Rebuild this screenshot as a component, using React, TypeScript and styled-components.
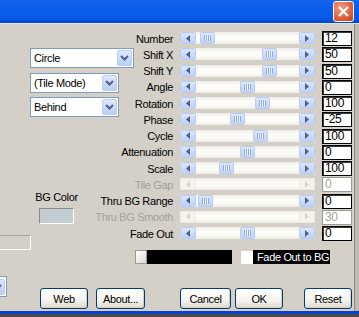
import styled, { createGlobalStyle } from 'styled-components';

type SliderRow = {
  label: string;
  value: string;
  pos?: number;
  disabled?: boolean;
};

const rows: SliderRow[] = [
  { label: 'Number', value: '12', pos: 4 },
  { label: 'Shift X', value: '50', pos: 66 },
  { label: 'Shift Y', value: '50', pos: 66 },
  { label: 'Angle', value: '0', pos: 44 },
  { label: 'Rotation', value: '100', pos: 59 },
  { label: 'Phase', value: '-25', pos: 34 },
  { label: 'Cycle', value: '100', pos: 57 },
  { label: 'Attenuation', value: '0', pos: 44 },
  { label: 'Scale', value: '100', pos: 23 },
  { label: 'Tile Gap', value: '0', disabled: true },
  { label: 'Thru BG Range', value: '0', pos: 2 },
  { label: 'Thru BG Smooth', value: '30', disabled: true },
  { label: 'Fade Out', value: '0', pos: 44 },
];

const GlobalStyle = createGlobalStyle`
  html, body {
    margin: 0;
    padding: 0;
    background: #d4d0c8;
  }
`;

const ArrowIcon = ({ dir, disabled }: { dir: 'left' | 'right'; disabled?: boolean }) => (
  <svg width="4" height="7" viewBox="0 0 4 7">
    <polygon
      points={dir === 'left' ? '4,0 0,3.5 4,7' : '0,0 4,3.5 0,7'}
      fill={disabled ? '#d6d4cc' : '#4d6185'}
    />
  </svg>
);

const Chevron = () => (
  <svg width="9" height="6" viewBox="0 0 9 6">
    <polyline points="1,1 4.5,4.5 8,1" fill="none" stroke="#4d6185" strokeWidth="2" />
  </svg>
);

const Combo = ({ text, width }: { text?: string; width: number }) => (
  <ComboBox style={{ width }}>
    <ComboText>{text}</ComboText>
    <ComboButton>
      <Chevron />
    </ComboButton>
  </ComboBox>
);

const App = () => {
  return (
    <>
      <GlobalStyle />
      <Window>
        <TitleBar>
          <CloseButton>
            <svg width="11" height="11" viewBox="0 0 11 11">
              <path d="M1 1 L10 10 M10 1 L1 10" stroke="#fff" strokeWidth="2.2" />
            </svg>
          </CloseButton>
        </TitleBar>
        <Frame>
          <Content>
            <Top>
              <LeftPanel>
                <Combo text="Circle" width={104} />
                <Combo text="(Tile Mode)" width={89} />
                <Combo text="Behind" width={89} />
                <ColorGroup>
                  <ColorLabel>BG Color</ColorLabel>
                  <Swatch />
                </ColorGroup>
                <EmptyField />
              </LeftPanel>
              <ControlGrid>
                {rows.map(row => (
                  <Row key={row.label}>
                    <Label $disabled={row.disabled}>{row.label}</Label>
                    <ScrollBar>
                      <ArrowButton $disabled={row.disabled}>
                        <ArrowIcon dir="left" disabled={row.disabled} />
                      </ArrowButton>
                      <Track>
                        {row.pos !== undefined && (
                          <Thumb style={{ marginLeft: row.pos }}>
                            <Grip />
                          </Thumb>
                        )}
                      </Track>
                      <ArrowButton $disabled={row.disabled}>
                        <ArrowIcon dir="right" disabled={row.disabled} />
                      </ArrowButton>
                    </ScrollBar>
                    <ValueBox $disabled={row.disabled}>{row.value}</ValueBox>
                  </Row>
                ))}
              </ControlGrid>
            </Top>
            <FadeRow>
              <PreviewBar>
                <PreviewChip />
              </PreviewBar>
              <CheckBox />
              <FadeLabel>Fade Out to BG</FadeLabel>
            </FadeRow>
            <ButtonRow>
              <PartialCombo>
                <ComboButton>
                  <Chevron />
                </ComboButton>
              </PartialCombo>
              <ButtonGroup $offset={33} $gap={8}>
                <Button $w={48}>Web</Button>
                <Button $w={49}>About...</Button>
              </ButtonGroup>
              <ButtonGroup $offset={35} $gap={4}>
                <Button $w={51}>Cancel</Button>
                <Button $w={48}>OK</Button>
              </ButtonGroup>
              <ButtonGroup $offset={21} $gap={0}>
                <Button $w={48}>Reset</Button>
              </ButtonGroup>
            </ButtonRow>
          </Content>
          <RightEdge />
        </Frame>
        <BottomEdge />
      </Window>
    </>
  );
};

const Window = styled.div`
  width: 359px;
  height: 317px;
  overflow: hidden;
  display: flex;
  flex-direction: column;
  background: #d4d0c8;
  font-family: 'Liberation Sans', Arial, sans-serif;
  font-size: 11px;
  letter-spacing: -0.35px;
  color: #000;
`;

const TitleBar = styled.div`
  flex: none;
  height: 23px;
  display: flex;
  justify-content: flex-end;
  align-items: center;
  padding-right: 5px;
  background: linear-gradient(#1466ee, #0a5de8 40%, #0559e6 80%, #0446cc);
  border-bottom: 1px solid #e4e1d8;
`;

const CloseButton = styled.div`
  width: 21px;
  height: 21px;
  box-sizing: border-box;
  display: flex;
  align-items: center;
  justify-content: center;
  border: 1px solid #fff;
  border-radius: 3px;
  background: radial-gradient(circle at 35% 30%, #f2a088, #e2643f 55%, #c4401f);
`;

const Frame = styled.div`
  flex: 1;
  display: flex;
  min-height: 0;
`;

const Content = styled.div`
  width: 354px;
  display: flex;
  flex-direction: column;
`;

const RightEdge = styled.div`
  flex: 1;
  background: #c0bcb3;
  border-left: 1px solid #8c8a84;
`;

const BottomEdge = styled.div`
  flex: none;
  height: 6px;
  background: linear-gradient(#0b3fd0 0 3px, #4a4a4a 3px);
`;

const Top = styled.div`
  display: flex;
  align-items: flex-start;
`;

const LeftPanel = styled.div`
  width: 135px;
  flex: none;
  display: flex;
  flex-direction: column;
  align-items: flex-start;
  padding: 24px 0 0 30px;
  box-sizing: border-box;
  & > div:nth-child(2) {
    margin-top: 5px;
  }
  & > div:nth-child(3) {
    margin-top: 4px;
  }
`;

const ComboBox = styled.div`
  height: 20px;
  box-sizing: border-box;
  display: flex;
  align-items: center;
  background: #fff;
  border: 1px solid #7f9db9;
`;

const ComboText = styled.span`
  flex: 1;
  padding-left: 3px;
  white-space: nowrap;
`;

const ComboButton = styled.div`
  width: 15px;
  height: 16px;
  margin-right: 1px;
  box-sizing: border-box;
  display: flex;
  align-items: center;
  justify-content: center;
  border: 1px solid #bccdf5;
  border-radius: 2px;
  background: linear-gradient(#dfe8fd, #b9cdf8);
`;

const ColorGroup = styled.div`
  margin: 74px 0 0 9px;
  width: 35px;
  display: flex;
  flex-direction: column;
  align-items: center;
  gap: 4px;
`;

const ColorLabel = styled.span`
  line-height: 13px;
  white-space: nowrap;
`;

const Swatch = styled.div`
  width: 35px;
  height: 16px;
  box-sizing: border-box;
  background: #c4ced2;
  border: 1px solid;
  border-color: #8a8a86 #fff #fff #8a8a86;
`;

const EmptyField = styled.div`
  margin: 11px 0 0 -50px;
  width: 51px;
  height: 15px;
  box-sizing: border-box;
  border: 1px solid;
  border-color: #a9a69e #fff #fff #a9a69e;
`;

const ControlGrid = styled.div`
  margin-top: 6px;
  display: grid;
  grid-template-columns: 38px 135px 30px;
  grid-auto-rows: 16.25px;
  column-gap: 7px;
`;

const Row = styled.div`
  display: contents;
`;

const Label = styled.span<{ $disabled?: boolean }>`
  justify-self: end;
  align-self: center;
  padding-top: 2px;
  white-space: nowrap;
  line-height: 13px;
  color: ${props => (props.$disabled ? '#a3a19b' : '#000')};
`;

const ScrollBar = styled.div`
  align-self: center;
  height: 12px;
  display: flex;
  background: linear-gradient(#eeece4, #fdfdfb 35%, #fbfaf6 70%, #ecebe3);
`;

const ArrowButton = styled.div<{ $disabled?: boolean }>`
  flex: none;
  width: 16px;
  height: 12px;
  box-sizing: border-box;
  display: flex;
  align-items: center;
  justify-content: center;
  border: 1px solid ${props => (props.$disabled ? '#eceae2' : '#b8cbf4')};
  border-radius: 2px;
  background: ${props =>
    props.$disabled ? '#f4f3ee' : 'linear-gradient(#dbe5fd, #bed1f9)'};
`;

const Track = styled.div`
  flex: 1;
  display: flex;
`;

const Thumb = styled.div`
  width: 15px;
  height: 12px;
  box-sizing: border-box;
  display: flex;
  align-items: center;
  justify-content: center;
  border: 1px solid #b8cbf4;
  border-radius: 2px;
  background: linear-gradient(#dce6fd, #c1d3fa);
`;

const Grip = styled.span`
  width: 7px;
  height: 6px;
  background: repeating-linear-gradient(90deg, #8cacf0 0 1px, #f2f6ff 1px 2px);
`;

const ValueBox = styled.div<{ $disabled?: boolean }>`
  align-self: start;
  margin-top: 1px;
  height: 15px;
  box-sizing: border-box;
  padding-left: 2px;
  font-size: 12px;
  line-height: 13px;
  background: #fff;
  border: 1px solid ${props => (props.$disabled ? '#9c9a94' : '#000')};
  box-shadow: ${props => (props.$disabled ? 'none' : 'inset 1px 1px 0 #3a3a3a')};
  color: ${props => (props.$disabled ? '#a3a19b' : '#000')};
`;

const FadeRow = styled.div`
  display: flex;
  align-items: center;
  height: 14px;
  padding-left: 135px;
`;

const PreviewBar = styled.div`
  width: 97px;
  height: 14px;
  display: flex;
  background: #000;
`;

const PreviewChip = styled.div`
  width: 12px;
  height: 14px;
  box-sizing: border-box;
  border: 1px solid #9a9890;
  background: linear-gradient(135deg, #ffffff, #dcdad4);
`;

const CheckBox = styled.div`
  margin-left: 9px;
  width: 12px;
  height: 13px;
  background: #fff;
`;

const FadeLabel = styled.div`
  width: 77px;
  height: 14px;
  box-sizing: border-box;
  padding-left: 4px;
  line-height: 14px;
  white-space: nowrap;
  overflow: hidden;
  background: #000;
  color: #fff;
`;

const ButtonRow = styled.div`
  margin-top: 12px;
  display: flex;
  align-items: flex-start;
`;

const PartialCombo = styled.div`
  margin-left: -23px;
  width: 30px;
  height: 21px;
  box-sizing: border-box;
  display: flex;
  align-items: center;
  justify-content: flex-end;
  background: #fff;
  border: 1px solid #7f9db9;
`;

const ButtonGroup = styled.div<{ $offset: number; $gap: number }>`
  margin: 12px 0 0 ${props => props.$offset}px;
  display: flex;
  gap: ${props => props.$gap}px;
`;

const Button = styled.div<{ $w: number }>`
  width: ${props => props.$w}px;
  height: 21px;
  box-sizing: border-box;
  display: flex;
  align-items: center;
  justify-content: center;
  border: 1px solid #003c74;
  border-radius: 3px;
  background: linear-gradient(#ffffff, #f4f3ee 60%, #dcd8cb);
  box-shadow: inset -1px -1px 0 #d6d0c2;
`;

export default App;
